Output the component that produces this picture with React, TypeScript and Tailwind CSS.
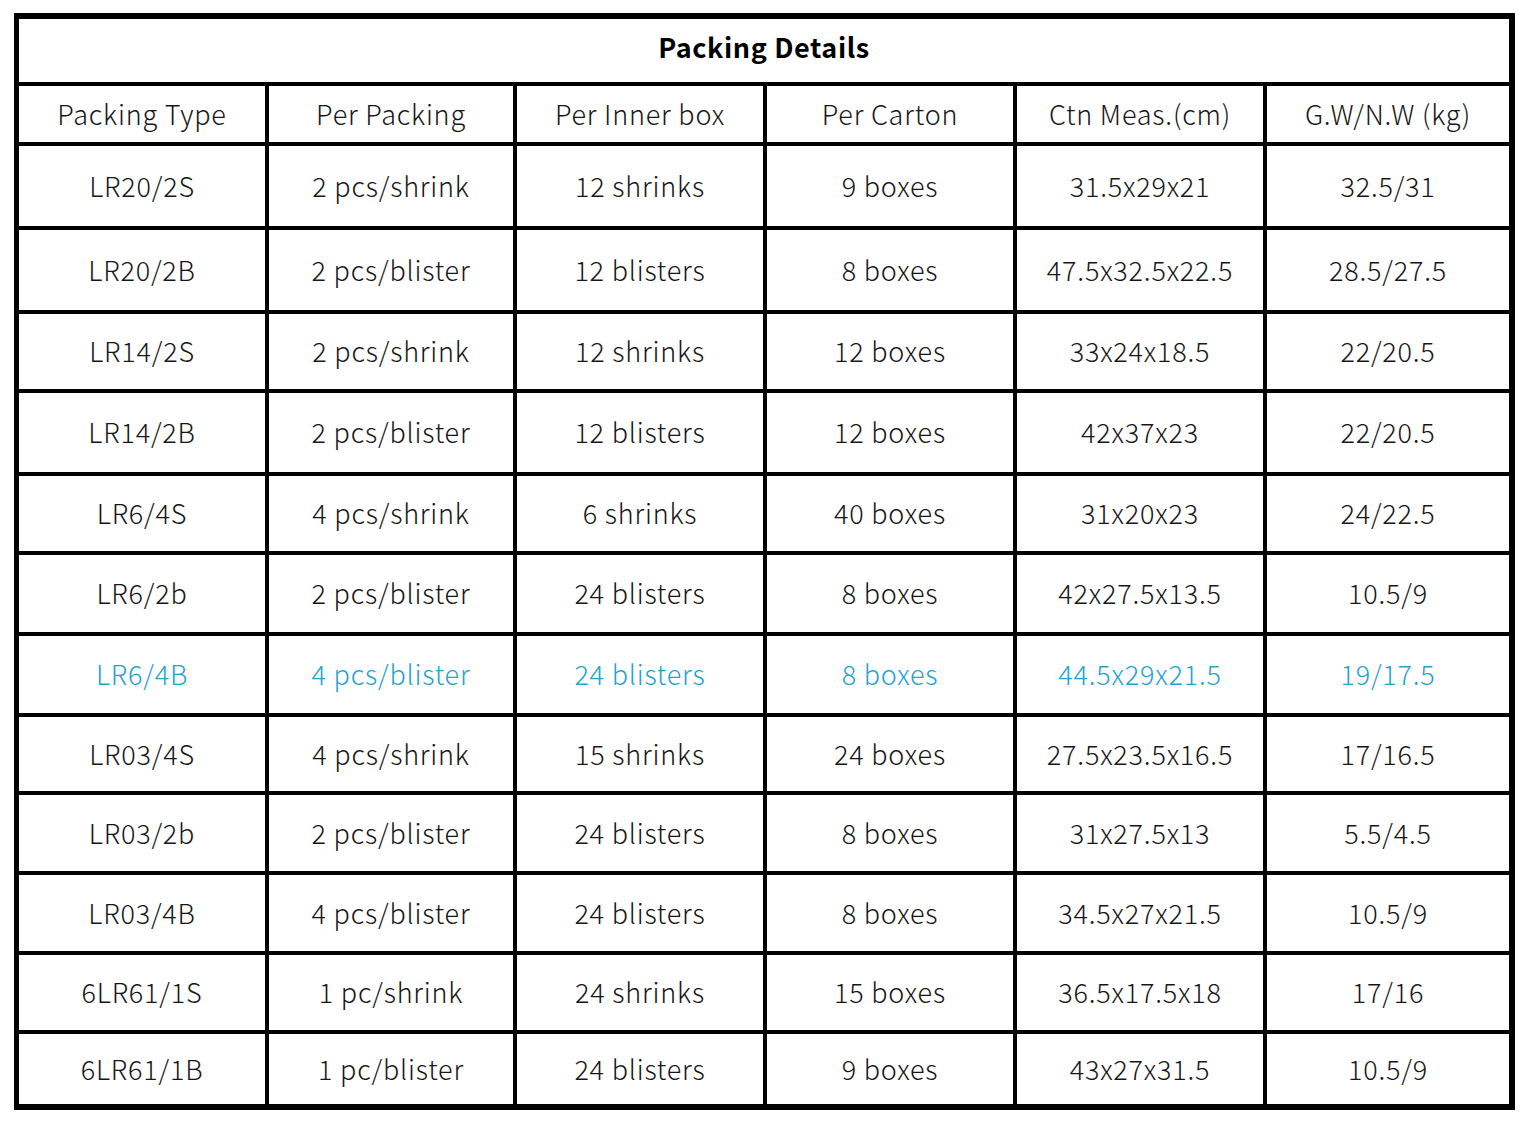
const rows: { cells: string[]; h: string; blue?: boolean }[] = [
  { cells: ['LR20/2S', '2 pcs/shrink', '12 shrinks', '9 boxes', '31.5x29x21', '32.5/31'], h: 'h-[84px]' },
  { cells: ['LR20/2B', '2 pcs/blister', '12 blisters', '8 boxes', '47.5x32.5x22.5', '28.5/27.5'], h: 'h-[84px]' },
  { cells: ['LR14/2S', '2 pcs/shrink', '12 shrinks', '12 boxes', '33x24x18.5', '22/20.5'], h: 'h-[79px]' },
  { cells: ['LR14/2B', '2 pcs/blister', '12 blisters', '12 boxes', '42x37x23', '22/20.5'], h: 'h-[83px]' },
  { cells: ['LR6/4S', '4 pcs/shrink', '6 shrinks', '40 boxes', '31x20x23', '24/22.5'], h: 'h-[79px]' },
  { cells: ['LR6/2b', '2 pcs/blister', '24 blisters', '8 boxes', '42x27.5x13.5', '10.5/9'], h: 'h-[81px]' },
  { cells: ['LR6/4B', '4 pcs/blister', '24 blisters', '8 boxes', '44.5x29x21.5', '19/17.5'], h: 'h-[81px]', blue: true },
  { cells: ['LR03/4S', '4 pcs/shrink', '15 shrinks', '24 boxes', '27.5x23.5x16.5', '17/16.5'], h: 'h-[78px]' },
  { cells: ['LR03/2b', '2 pcs/blister', '24 blisters', '8 boxes', '31x27.5x13', '5.5/4.5'], h: 'h-[80px]' },
  { cells: ['LR03/4B', '4 pcs/blister', '24 blisters', '8 boxes', '34.5x27x21.5', '10.5/9'], h: 'h-[80px]' },
  { cells: ['6LR61/1S', '1 pc/shrink', '24 shrinks', '15 boxes', '36.5x17.5x18', '17/16'], h: 'h-[79px]' },
  { cells: ['6LR61/1B', '1 pc/blister', '24 blisters', '9 boxes', '43x27x31.5', '10.5/9'], h: 'h-[70px]' },
];

const headers = ['Packing Type', 'Per Packing', 'Per Inner box', 'Per Carton', 'Ctn Meas.(cm)', 'G.W/N.W (kg)'];

function Row({ cells, h, blue, last }: { cells: string[]; h: string; blue?: boolean; last?: boolean }) {
  return (
    <div
      className={`grid grid-cols-[250px_248px_250px_250px_250px_242px] ${h} ${last ? '' : 'border-b-4 border-black'}`}
    >
      {cells.map((c, i) => (
        <div
          key={i}
          className={`flex items-center justify-center ${i < 5 ? 'border-r-4 border-black' : ''} ${
            blue ? 'text-[#1fa3cf]' : 'text-[#161616]'
          }`}
        >
          {c}
        </div>
      ))}
    </div>
  );
}

export default function App() {
  return (
    <div className="w-[1532px] h-[1122px] bg-white pt-[13px] pl-[14px]">
      <div
        className="w-[1501px] border-l-[5px] border-t-[6px] border-r-[6px] border-b-[6px] border-black text-[27px] font-light tracking-[0.8px]"
        style={{ fontFamily: '"Noto Sans CJK SC", "Noto Sans", sans-serif' }}
      >
        <div className="h-[67px] border-b-4 border-black flex items-center justify-center pb-1.5 text-[27px] font-bold tracking-[0.6px] text-black">
          Packing Details
        </div>
        <Row cells={headers} h="h-[60px]" />
        {rows.map((r, i) => (
          <Row key={i} cells={r.cells} h={r.h} blue={r.blue} last={i === rows.length - 1} />
        ))}
      </div>
    </div>
  );
}
